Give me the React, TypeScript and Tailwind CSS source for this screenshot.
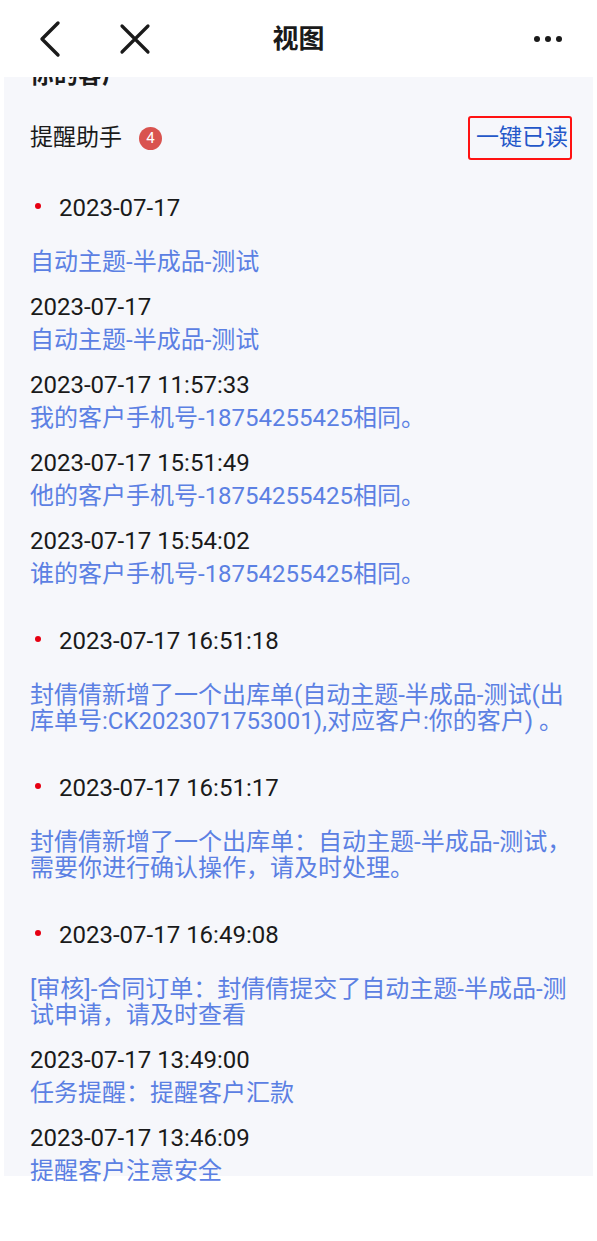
import React from "react";

type SubItem = { time: string; text: string };
type Card = { time: string; lines: string[]; subs: SubItem[] };

const cards: Card[] = [
  {
    time: "2023-07-17",
    lines: ["自动主题-半成品-测试"],
    subs: [
      { time: "2023-07-17", text: "自动主题-半成品-测试" },
      { time: "2023-07-17 11:57:33", text: "我的客户手机号-18754255425相同。" },
      { time: "2023-07-17 15:51:49", text: "他的客户手机号-18754255425相同。" },
      { time: "2023-07-17 15:54:02", text: "谁的客户手机号-18754255425相同。" },
    ],
  },
  {
    time: "2023-07-17 16:51:18",
    lines: [
      "封倩倩新增了一个出库单(自动主题-半成品-测试(出",
      "库单号:CK2023071753001),对应客户:你的客户) 。",
    ],
    subs: [],
  },
  {
    time: "2023-07-17 16:51:17",
    lines: [
      "封倩倩新增了一个出库单：自动主题-半成品-测试，",
      "需要你进行确认操作，请及时处理。",
    ],
    subs: [],
  },
  {
    time: "2023-07-17 16:49:08",
    lines: ["[审核]-合同订单：封倩倩提交了自动主题-半成品-测", "试申请，请及时查看"],
    subs: [
      { time: "2023-07-17 13:49:00", text: "任务提醒：提醒客户汇款" },
      { time: "2023-07-17 13:46:09", text: "提醒客户注意安全" },
    ],
  },
];

const font = { fontFamily: 'Roboto, "Noto Sans CJK SC", sans-serif' };

export default function App() {
  return (
    <div className="min-h-screen w-full bg-white text-[#1a1a1a]" style={font}>
      {/* Top bar */}
      <header className="relative z-10 grid h-[77px] grid-cols-3 items-center bg-white">
        <div className="flex items-center pl-[36px]">
          <svg width="28" height="40" viewBox="0 0 28 40" fill="none">
            <path
              d="M22 4 L6 20 L22 36"
              stroke="#1a1a1a"
              strokeWidth="3.4"
              strokeLinecap="round"
              strokeLinejoin="round"
            />
          </svg>
          <svg className="ml-[54px]" width="34" height="34" viewBox="0 0 34 34" fill="none">
            <path
              d="M4 4 L30 30 M30 4 L4 30"
              stroke="#1a1a1a"
              strokeWidth="3.2"
              strokeLinecap="round"
            />
          </svg>
        </div>
        <div className="text-center text-[26px] font-bold leading-none">视图</div>
        <div className="flex items-center justify-end gap-[5px] pr-[35px]">
          <span className="h-[6px] w-[6px] rounded-full bg-[#1a1a1a]" />
          <span className="h-[6px] w-[6px] rounded-full bg-[#1a1a1a]" />
          <span className="h-[6px] w-[6px] rounded-full bg-[#1a1a1a]" />
        </div>
      </header>

      {/* Scroll panel */}
      <div className="mx-[4px] flow-root h-[1099px] bg-[#f6f7fb] pl-[26px] pr-[21px]">
        <div className="-mt-[15px] text-[24px] font-bold leading-[26px]">你的客户</div>

        <div className="mt-[28px] flex h-[44px] items-center justify-between">
          <div className="flex items-center">
            <span className="text-[23px] leading-[26px]">提醒助手</span>
            <span className="ml-[17px] flex h-[23px] w-[23px] items-center justify-center rounded-full bg-[#d9534f] text-[15px] leading-none text-white">
              4
            </span>
          </div>
          <button className="flex h-[44px] items-center rounded-[3px] border-[2.5px] border-[#ff1212] pl-[6px] pr-[2px] text-[23px] leading-[26px] text-[#2457c9]">
            一键已读
          </button>
        </div>

        <div className="mt-[35px] flex flex-col gap-[41px]">
          {cards.map((c, i) => (
            <div key={i}>
              <div className="flex h-[26px] items-center text-[24px] leading-[26px]">
                <span className="ml-[5px] -mt-[5px] h-[6px] w-[6px] rounded-full bg-[#e60012]" />
                <span className="ml-[18px]">{c.time}</span>
              </div>
              <div className="mt-[28px] text-[24px] leading-[26px] text-[#5b80e3]">
                {c.lines.map((l, j) => (
                  <div key={j} className="whitespace-nowrap">
                    {l}
                  </div>
                ))}
              </div>
              {c.subs.map((s, k) => (
                <div key={k} className="mt-[19px] text-[24px] leading-[26px]">
                  <div>{s.time}</div>
                  <div className="mt-[7px] text-[#5b80e3]">{s.text}</div>
                </div>
              ))}
            </div>
          ))}
        </div>
      </div>
    </div>
  );
}
